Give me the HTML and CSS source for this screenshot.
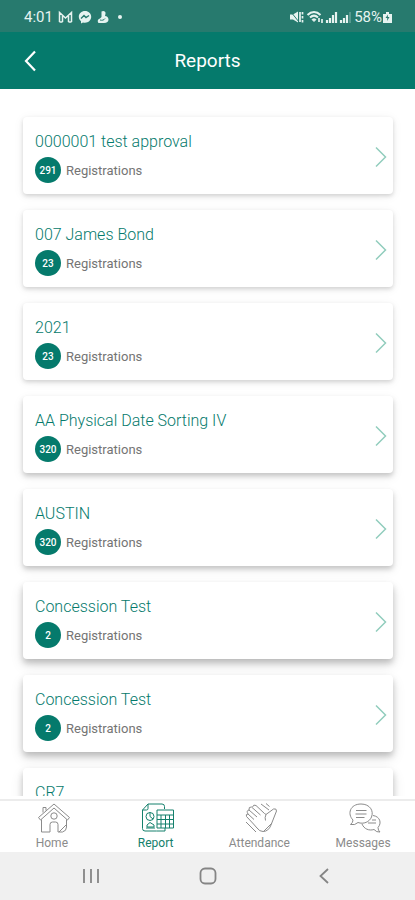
FILE: index.html
```html
<!DOCTYPE html>
<html lang="en">
<head>
<meta charset="utf-8">
<meta name="viewport" content="width=device-width, initial-scale=1">
<title>Reports</title>
<link rel="stylesheet" href="styles.css">
</head>
<body>
<div class="status">
  <span class="clock">4:01</span>
  <svg class="status-icon" width="15" height="14" viewBox="0 0 15 14"><path d="M1.5 12V2.5L7.5 8l6-5.5V12M4.500 12V6M10.500 12V6M1.500 12h3M10.500 12h3" fill="none" stroke="currentColor" stroke-width="1.500"/></svg>
  <svg class="status-icon" width="14" height="14" viewBox="0 0 14 14"><path d="M7 1C3.500 1 .8 3.500.8 6.800c0 1.900.9 3.400 2.200 4.400V13.500l2-1.100c.6.200 1.300.3 2 .3 3.500 0 6.200-2.600 6.200-5.900S10.500 1 7 1z" fill="currentColor"/><path d="M3 8.500l3-3 2 2 3-2" fill="none" stroke="#277a6e" stroke-width="1.400"/></svg>
  <svg class="status-icon" width="12" height="14" viewBox="0 0 12 14"><path d="M4.500 1.500c2-1.300 4.500 0 4 2.200L8 6c2 .2 3.500 1.500 3.500 3.500 0 2-1.500 3.500-4.500 3.500H1.500C0 11 1 9 3 8.500L4.500 7z" fill="currentColor"/><path d="M3 10c2 .6 4 .2 5-1.500" fill="none" stroke="#277a6e"/></svg>
  <span class="dot"></span>
  <span class="spacer"></span>
  <svg class="signals" width="61" height="14" viewBox="0 0 61 14" fill="none" stroke="currentColor">
    <path d="M0 4.500h3L8 1.500v11L3 9.500H0z" fill="currentColor" stroke="none"/>
    <path d="M1 2l8 10" stroke="#277a6e"/><path d="M10 2v10M12.500 2v2.500M12.500 6v2.500M12.500 10v2.500" stroke-width="1.700"/>
    <path d="M17.500 5c4-4 9-4 13 0M20 7.500c2.500-2.400 5.500-2.400 8 0" stroke-width="2"/><path d="M22 9.500q2-1.500 4 0l-2 2z" fill="currentColor"/><path d="M29 8v4M32 9v4" stroke-width="1.700"/>
    <path d="M37 13v-3M40 13V8M43 13V5M46 13V2" stroke-width="2.200"/>
    <path d="M51 13v-3M54 13V8M57 13V5" stroke-width="2.200"/><path d="M60 13V2" opacity=".5"/>
  </svg>
  <span class="battery-text">58%</span>
  <svg class="battery" width="9" height="14" viewBox="0 0 9 14"><path d="M3 2h3v2h3v9H0V4h3z" fill="currentColor"/><path d="M5 4.500L2.500 8h1.800L4 11l2.500-4H4.800z" fill="#277a6e"/></svg>
</div>
<header class="topbar">
  <button class="back" aria-label="Back"><svg width="14" height="24" viewBox="0 0 14 24"><path d="M11 2.500L2 12l9 9.500" fill="none" stroke="currentColor" stroke-width="2.200"/></svg></button>
  <h1 class="title">Reports</h1>
</header>
<main class="list">
  <a class="card" href="#"><span class="info"><span class="name">0000001 test approval</span><span class="meta"><span class="count">291</span>Registrations</span></span><svg class="chevron" viewBox="0 0 12 22"><path d="M1 1.500L10.500 11 1 20.500"/></svg></a>
  <a class="card" href="#"><span class="info"><span class="name">007 James Bond</span><span class="meta"><span class="count">23</span>Registrations</span></span><svg class="chevron" viewBox="0 0 12 22"><path d="M1 1.500L10.500 11 1 20.500"/></svg></a>
  <a class="card" href="#"><span class="info"><span class="name">2021</span><span class="meta"><span class="count">23</span>Registrations</span></span><svg class="chevron" viewBox="0 0 12 22"><path d="M1 1.500L10.500 11 1 20.500"/></svg></a>
  <a class="card raised" href="#"><span class="info"><span class="name">AA Physical Date Sorting IV</span><span class="meta"><span class="count">320</span>Registrations</span></span><svg class="chevron" viewBox="0 0 12 22"><path d="M1 1.500L10.500 11 1 20.500"/></svg></a>
  <a class="card raised" href="#"><span class="info"><span class="name">AUSTIN</span><span class="meta"><span class="count">320</span>Registrations</span></span><svg class="chevron" viewBox="0 0 12 22"><path d="M1 1.500L10.500 11 1 20.500"/></svg></a>
  <a class="card high" href="#"><span class="info"><span class="name">Concession Test</span><span class="meta"><span class="count">2</span>Registrations</span></span><svg class="chevron" viewBox="0 0 12 22"><path d="M1 1.500L10.500 11 1 20.500"/></svg></a>
  <a class="card high" href="#"><span class="info"><span class="name">Concession Test</span><span class="meta"><span class="count">2</span>Registrations</span></span><svg class="chevron" viewBox="0 0 12 22"><path d="M1 1.500L10.500 11 1 20.500"/></svg></a>
  <a class="card high" href="#"><span class="info"><span class="name">CR7</span></span><svg class="chevron" viewBox="0 0 12 22"><path d="M1 1.500L10.500 11 1 20.500"/></svg></a>
</main>
<nav class="tabs">
  <a class="tab" href="#"><svg class="tab-icon" viewBox="0 0 34 32"><path d="M1.500 15.500L17 2l15.500 13.500-2 2.500L17 6 3.500 18zM4.500 17.500V30H13v-7.500q0-2.500 2.500-2.500h3q2.500 0 2.500 2.500V30h4.500q4-1 4-5v-7.500M6 10.500V5.500h3v3M22 30l8-8"/><circle cx="17" cy="14" r="3.200"/></svg>Home</a>
  <a class="tab active" href="#"><svg class="tab-icon" viewBox="0 0 34 32"><path d="M15.500 29H4q-2.500 0-2.500-2.500V8L7 2h14q2.500 0 2.500 2.500V7M7 2v4.500Q7 8 5.500 8h-4M15.500 29h8.500v-3M5 26h9M6 25v-2l3-2.500 4 2.500v2zM16 8h16.500v18H16zM16 13h16.500M16 17.500h16.500M16 22h16.500M20 13v13M24.500 13v13M28.500 13v13"/><circle cx="9" cy="14.500" r="4"/><path d="M9 10.500v4l3 2.500"/></svg>Report</a>
  <a class="tab" href="#"><svg class="tab-icon" viewBox="0 0 34 32"><path d="M9.500 22L2.500 14.500q-1-2.500 1.500-2.500l6 5.500M4 12q-2-3.500 1-4l8 7M5 8q-.5-3.500 2.500-3l9 8M8.500 5q1-3 3.500-1.500l8.500 8 1.500 1L29.500 7q3-1 3 2L27 23q-2.500 6.500-8 6.500-3.500 0-6-3.500l-3.500-4M22 12.500q-1.500 3-.5 6M17 2l8 6M22 1.500l3.500 3M2 20l10 10M20 29l8-8"/></svg>Attendance</a>
  <a class="tab" href="#"><svg class="tab-icon" viewBox="0 0 34 32"><path d="M5 18C-1 12 2 2 13 2c9 0 13 7 10.500 13-2 5-8 7.500-13.500 5.500Q7 23.500 2.500 22.500 5 20.500 5 18zM8 8.500h10.500M7.500 12h11M8 15.500h8.500"/><path d="M25 13.500c7 1 9 7.500 5 12q0 3 2 4.500-3.500.5-6-2.500c-5 1.500-10-.5-12-5.500M20 21h8M24 18h4"/></svg>Messages</a>
</nav>
<div class="system">
  <button class="sys" aria-label="Recent apps"><svg width="18" height="18" viewBox="0 0 18 18"><path d="M2 2v14M9 2v14M16 2v14"/></svg></button>
  <button class="sys" aria-label="Home screen"><svg width="18" height="18" viewBox="0 0 18 18"><rect x="1.500" y="1.500" width="15" height="15" rx="4.500"/></svg></button>
  <button class="sys" aria-label="Go back"><svg width="18" height="18" viewBox="0 0 18 18"><path d="M12 2L4.500 9l7.500 7"/></svg></button>
</div>
</body>
</html>
```
FILE: styles.css
```css
* { box-sizing: border-box; }
body {
  margin: 0;
  height: 100vh;
  display: flex;
  flex-direction: column;
  overflow: hidden;
  background: #fff;
  font-family: Roboto, "Liberation Sans", sans-serif;
}
a { text-decoration: none; }
button { border: 0; padding: 0; background: none; }
svg { flex: none; display: block; }

.status {
  flex: none;
  height: 32px;
  padding: 2px 23px 0 24px;
  display: flex;
  align-items: center;
  gap: 5px;
  background: #277a6e;
  color: #e6f3f0;
  font-size: 15px;
}
.dot { width: 4px; height: 4px; margin-left: 4px; border-radius: 2px; background: currentColor; }
.spacer { flex: 1; }
.signals { margin-right: -2px; }
.battery { margin-left: -4px; }

.topbar {
  flex: none;
  height: 57px;
  padding: 0 24px;
  display: grid;
  grid-template-columns: 14px 1fr 14px;
  align-items: center;
  background: #057a6c;
  color: #fff;
}
.back { color: inherit; }
.title { margin: 0; text-align: center; font-size: 19px; font-weight: 400; line-height: 24px; }

.list {
  flex: 1;
  min-height: 0;
  margin-bottom: 3px;
  padding: 28px 22px 0 23px;
  display: flex;
  flex-direction: column;
  gap: 16px;
  overflow-y: auto;
  scrollbar-width: none;
}
.card {
  flex: none;
  min-height: 77px;
  padding: 13px 6px 11px 12px;
  display: flex;
  align-items: center;
  justify-content: space-between;
  border-radius: 4px;
  background: #fff;
  box-shadow: 0 2px 4px rgba(0, 0, 0, .15), 0 2px 12px rgba(0, 0, 0, .06);
}
.raised { box-shadow: 0 3px 5px rgba(0, 0, 0, .18), 0 4px 12px rgba(0, 0, 0, .08); }
.high { box-shadow: 0 4px 6px rgba(0, 0, 0, .2), 0 6px 14px rgba(0, 0, 0, .11); }
.info { align-self: stretch; display: flex; flex-direction: column; gap: 3px; }
.name { color: #057a6c; font-size: 16px; font-weight: 300; line-height: 24px; }
.meta { display: flex; align-items: center; gap: 5px; color: #747474; font-size: 13px; }
.count {
  width: 26px;
  height: 26px;
  border-radius: 50%;
  display: grid;
  place-items: center;
  background: #057a6c;
  color: #fff;
  font-size: 10px;
  font-weight: 500;
}
.chevron { width: 12px; height: 22px; fill: none; stroke: #92cdbd; stroke-width: 1.5; }

.tabs {
  flex: none;
  height: 53px;
  padding-top: 1px;
  display: grid;
  grid-template-columns: repeat(4, 1fr);
  border-top: 2px solid #ececec;
}
.tab {
  display: flex;
  flex-direction: column;
  align-items: center;
  color: #8b8b8b;
  font-size: 12px;
  line-height: 18px;
}
.active { color: #14806c; }
.tab-icon { width: 34px; height: 32px; margin-left: 4px; fill: none; stroke: currentColor; stroke-width: 1; }

.system {
  flex: none;
  height: 48px;
  padding: 0 32px;
  display: grid;
  grid-template-columns: repeat(3, 1fr);
  background: #f0f0f0;
}
.sys { display: grid; place-items: center; }
.sys svg { fill: none; stroke: #858585; stroke-width: 1.8; }
```
